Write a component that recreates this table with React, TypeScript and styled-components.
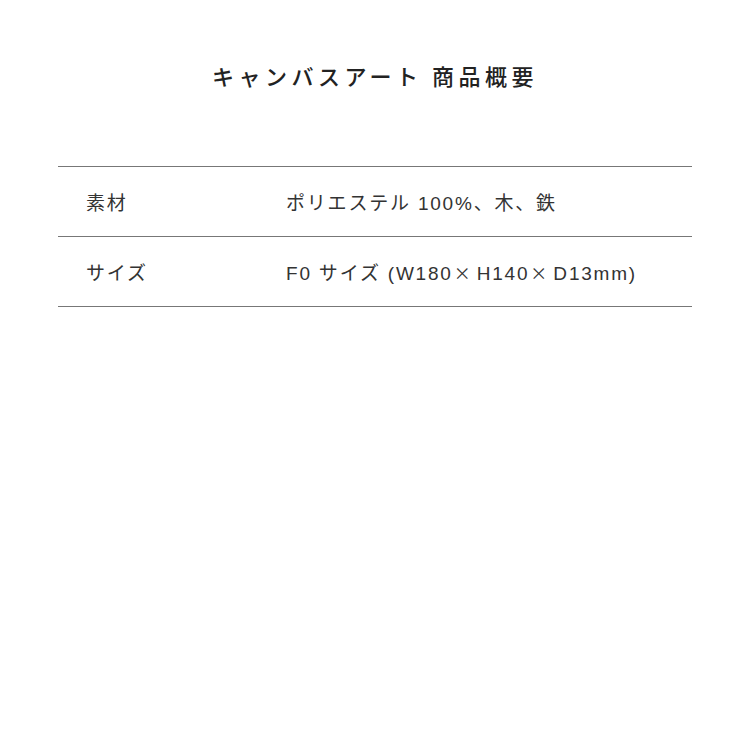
import React from "react";
import styled, { createGlobalStyle } from "styled-components";

const GlobalStyle = createGlobalStyle`
  html, body {
    margin: 0;
    padding: 0;
    background: #ffffff;
  }
  body {
    font-family: "Liberation Sans", "Noto Sans CJK JP", sans-serif;
    color: #333333;
  }
`;

const specs = [
  { label: "素材", value: "ポリエステル 100%、木、鉄" },
  { label: "サイズ", value: "F0 サイズ (W180×H140×D13mm)" },
];

// the × sign is set wide, like a full-width glyph
const renderValue = (text: string) =>
  text.split("×").map((part, i) => (
    <React.Fragment key={i}>
      {i > 0 && <Times>×</Times>}
      {part}
    </React.Fragment>
  ));

export default function App() {
  return (
    <>
      <GlobalStyle />
      <Page>
        <Title>キャンバスアート 商品概要</Title>
        <SpecTable>
          {specs.map((row) => (
            <Row key={row.label}>
              <Label>{row.label}</Label>
              <Value>{renderValue(row.value)}</Value>
            </Row>
          ))}
        </SpecTable>
      </Page>
    </>
  );
}

const Page = styled.main`
  width: 750px;
  height: 750px;
  display: flex;
  flex-direction: column;
  align-items: center;
  padding-top: 58px;
  box-sizing: border-box;
`;

const Title = styled.h1`
  margin: 0;
  font-family: "Noto Sans CJK JP", sans-serif;
  font-size: 22px;
  line-height: 34px;
  font-weight: 500;
  letter-spacing: 4.5px;
  color: #222222;
`;

const SpecTable = styled.dl`
  margin: 74px 0 0;
  width: 634px;
  border-top: 1px solid #777777;
`;

const Row = styled.div`
  display: flex;
  align-items: center;
  height: 69px;
  border-bottom: 1px solid #777777;
`;

const Label = styled.dt`
  width: 200px;
  padding-left: 28px;
  font-size: 19px;
  letter-spacing: 1.8px;
`;

const Value = styled.dd`
  margin: 0;
  font-size: 19px;
  letter-spacing: 1.8px;
`;

const Times = styled.span`
  display: inline-block;
  width: 24px;
  padding-left: 1px;
  box-sizing: border-box;
  font-family: "Noto Sans CJK JP", sans-serif;
  font-size: 17px;
  font-feature-settings: "fwid" 1;
  letter-spacing: 0;
  text-align: left;
`;
